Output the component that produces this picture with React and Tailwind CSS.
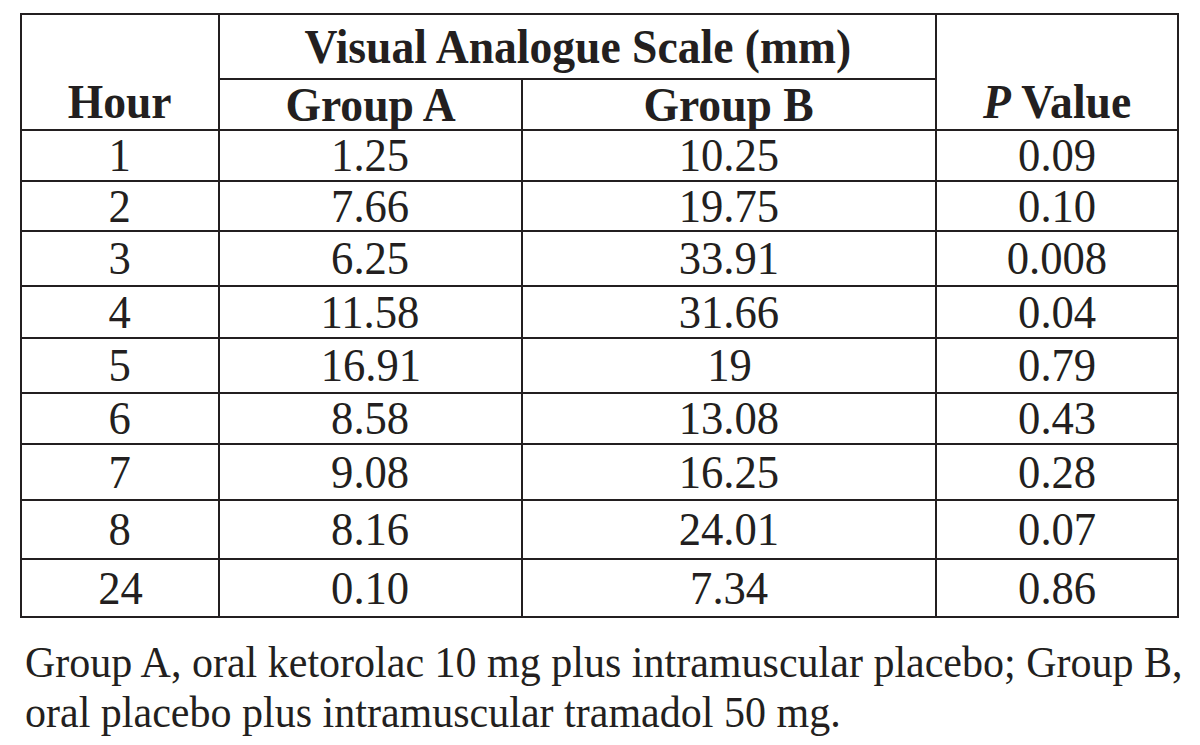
import React from 'react';

const rows = [
  { hour: '1', a: '1.25', b: '10.25', p: '0.09', h: 'h-[51px]' },
  { hour: '2', a: '7.66', b: '19.75', p: '0.10', h: 'h-[50px]' },
  { hour: '3', a: '6.25', b: '33.91', p: '0.008', h: 'h-[55px]' },
  { hour: '4', a: '11.58', b: '31.66', p: '0.04', h: 'h-[52px]' },
  { hour: '5', a: '16.91', b: '19', p: '0.79', h: 'h-[55px]' },
  { hour: '6', a: '8.58', b: '13.08', p: '0.43', h: 'h-[51px]' },
  { hour: '7', a: '9.08', b: '16.25', p: '0.28', h: 'h-[56px]' },
  { hour: '8', a: '8.16', b: '24.01', p: '0.07', h: 'h-[59px]' },
  { hour: '24', a: '0.10', b: '7.34', p: '0.86', h: 'h-[58px]' },
];

// the scan is a little condensed, so text is squeezed horizontally
const Squeeze = ({ children }) => (
  <span className="inline-block scale-x-[0.95] whitespace-nowrap">{children}</span>
);

const cell = 'border-2 border-[#231f20] p-0 text-center';

export default function App() {
  return (
    <div className="w-[1200px] h-[745px] overflow-hidden bg-white text-[#231f20] font-['Liberation_Serif','Times_New_Roman',serif]">
      <table className="ml-[20px] mt-[13px] w-[1157px] table-fixed border-collapse">
        <colgroup>
          <col className="w-[198px]" />
          <col className="w-[303px]" />
          <col className="w-[414px]" />
          <col className="w-[242px]" />
        </colgroup>
        <thead className="font-bold text-[48px] leading-none">
          <tr>
            <th rowSpan={2} className={`${cell} align-bottom pb-[3px]`}>
              <Squeeze>Hour</Squeeze>
            </th>
            <th colSpan={2} className={`${cell} h-[65px] align-middle`}>
              <Squeeze>Visual Analogue Scale (mm)</Squeeze>
            </th>
            <th rowSpan={2} className={`${cell} align-bottom pb-[3px]`}>
              <Squeeze>
                <i>P</i> Value
              </Squeeze>
            </th>
          </tr>
          <tr>
            <th className={`${cell} h-[51px] align-middle`}>
              <Squeeze>Group A</Squeeze>
            </th>
            <th className={`${cell} h-[51px] align-middle`}>
              <Squeeze>Group B</Squeeze>
            </th>
          </tr>
        </thead>
        <tbody className="text-[47px] leading-none">
          {rows.map((r) => (
            <tr key={r.hour}>
              <td className={`${cell} ${r.h} align-middle`}>
                <Squeeze>{r.hour}</Squeeze>
              </td>
              <td className={`${cell} ${r.h} align-middle`}>
                <Squeeze>{r.a}</Squeeze>
              </td>
              <td className={`${cell} ${r.h} align-middle`}>
                <Squeeze>{r.b}</Squeeze>
              </td>
              <td className={`${cell} ${r.h} align-middle`}>
                <Squeeze>{r.p}</Squeeze>
              </td>
            </tr>
          ))}
        </tbody>
      </table>

      {/* Footnote */}
      <p className="ml-[25px] mt-[20px] text-[44px] leading-[50px] whitespace-nowrap origin-left scale-x-[0.955]">
        Group A, oral ketorolac 10 mg plus intramuscular placebo; Group B,
        <br />
        oral placebo plus intramuscular tramadol 50 mg.
      </p>
    </div>
  );
}
